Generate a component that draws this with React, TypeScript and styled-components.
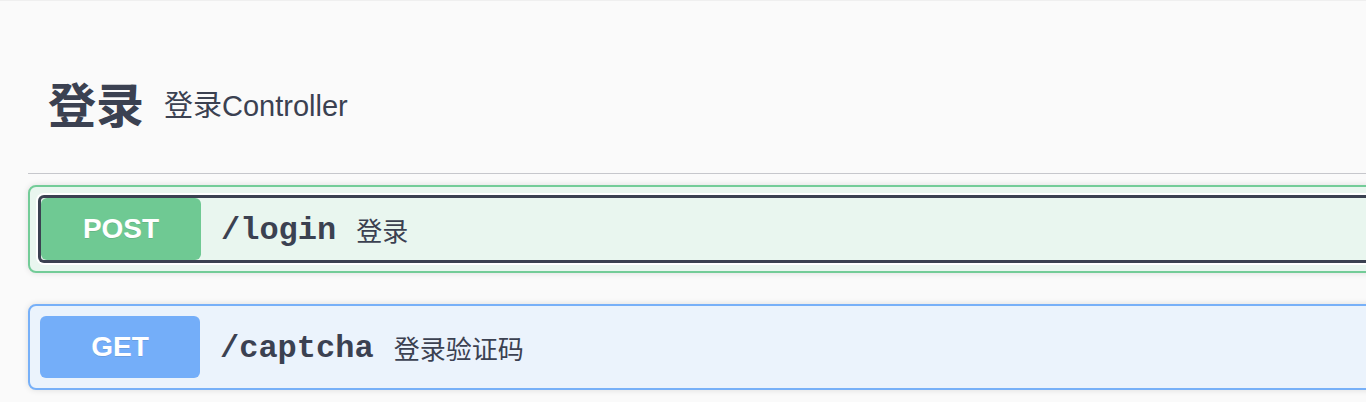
import React from "react";
import styled, { createGlobalStyle } from "styled-components";

const GlobalStyle = createGlobalStyle`
  html, body {
    margin: 0;
    padding: 0;
    background: #fafafa;
    overflow: hidden;
  }
  body {
    font-family: "Liberation Sans", "Noto Sans CJK SC", sans-serif;
    color: #3b4151;
  }
  * { box-sizing: border-box; }
`;

const Page = styled.div`
  border-top: 1px solid #efefef;
  padding: 37px 0 0 28px;
  width: 1420px;
`;

const TagHeader = styled.h4`
  margin: 0 0 11px;
  min-height: 136px;
  display: flex;
  align-items: center;
  padding: 2px 20px 0;
  border-bottom: 1px solid #c6c7cc;
  font-family: "Liberation Sans", "Noto Sans CJK SC", sans-serif;
`;

const TagTitle = styled.span`
  font-size: 48px;
  font-weight: 700;
  color: #3b4151;
  line-height: 1;
`;

const TagDesc = styled.small`
  font-size: 29px;
  font-weight: 400;
  color: #3b4151;
  margin-left: 20px;
  line-height: 1;
`;

type Tone = "post" | "get";

const tones: Record<Tone, { border: string; bg: string; badge: string }> = {
  post: { border: "#73cc98", bg: "#e9f6ef", badge: "#6fc993" },
  get: { border: "#77b0f8", bg: "#ebf3fc", badge: "#74aef9" },
};

const Block = styled.div<{ $tone: Tone }>`
  margin-bottom: 31px;
  border: 2px solid ${(p) => tones[p.$tone].border};
  background: ${(p) => tones[p.$tone].bg};
  border-radius: 8px;
  padding: 8px;
  box-shadow: 0 0 6px rgba(0, 0, 0, 0.12);
`;

const Summary = styled.div<{ $focused?: boolean }>`
  display: flex;
  align-items: center;
  border-radius: 6px;
  padding: ${(p) => (p.$focused ? "3px" : "2px")};
  ${(p) =>
    p.$focused
      ? "box-shadow: inset 0 0 0 3px #3b4151, 0 0 0 2px #ffffff;"
      : ""}
`;

const Method = styled.span<{ $tone: Tone }>`
  display: flex;
  align-items: center;
  justify-content: center;
  width: 160px;
  height: 62px;
  border-radius: 6px;
  background: ${(p) => tones[p.$tone].badge};
  color: #fff;
  font-family: "Liberation Sans", sans-serif;
  font-size: 28px;
  font-weight: 700;
  text-shadow: 0 1px 0 rgba(0, 0, 0, 0.1);
`;

const Path = styled.span`
  padding: 2px 20px 0;
  font-family: "Liberation Mono", "Courier New", monospace;
  font-size: 32px;
  font-weight: 700;
  color: #3b4151;
`;

const Desc = styled.span`
  font-family: "Liberation Sans", "Noto Sans CJK SC", sans-serif;
  font-size: 26px;
  color: #3b4151;
`;

const ops: { method: string; tone: Tone; path: string; desc: string; focused?: boolean }[] = [
  { method: "POST", tone: "post", path: "/login", desc: "登录", focused: true },
  { method: "GET", tone: "get", path: "/captcha", desc: "登录验证码" },
];

export default function App() {
  return (
    <>
      <GlobalStyle />
      <Page>
        <TagHeader>
          <TagTitle>登录</TagTitle>
          <TagDesc>登录Controller</TagDesc>
        </TagHeader>
        {ops.map((op) => (
          <Block key={op.path} $tone={op.tone}>
            <Summary $focused={op.focused}>
              <Method $tone={op.tone}>{op.method}</Method>
              <Path>{op.path}</Path>
              <Desc>{op.desc}</Desc>
            </Summary>
          </Block>
        ))}
      </Page>
    </>
  );
}
